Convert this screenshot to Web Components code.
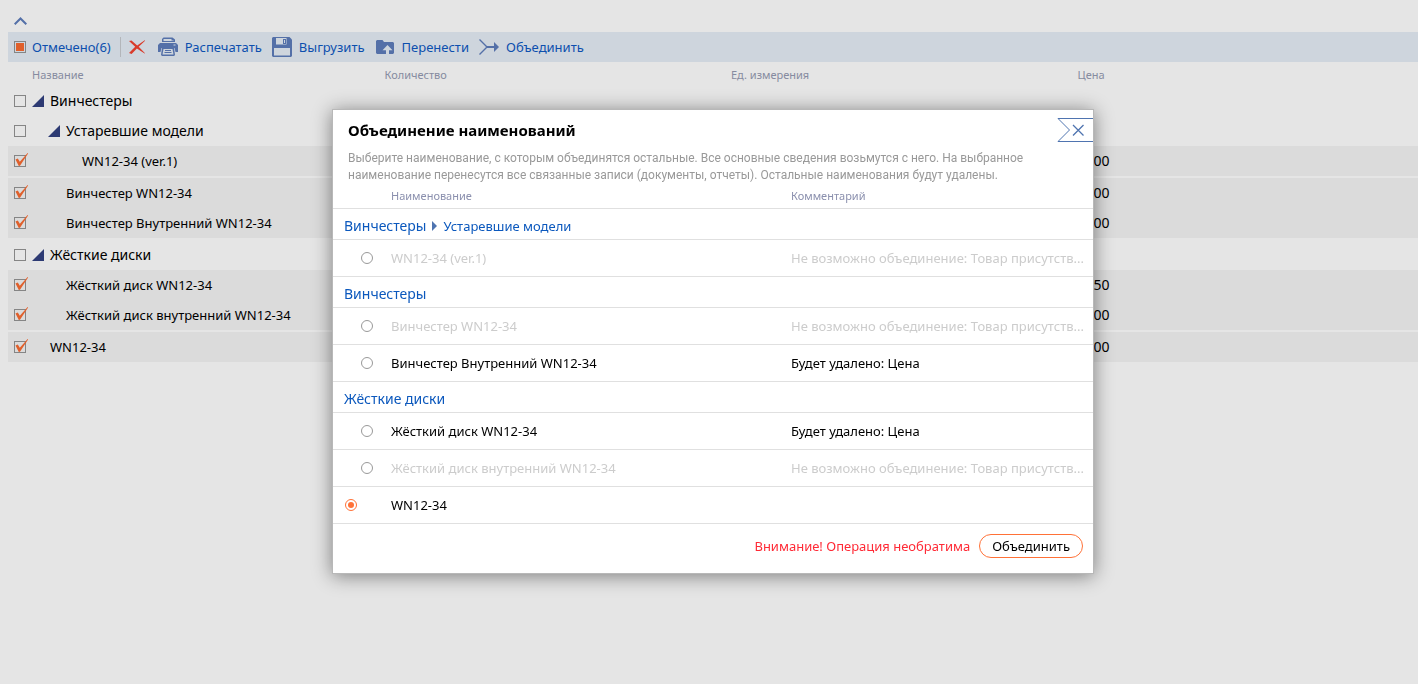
<!DOCTYPE html>
<html lang="ru">
<head>
<meta charset="utf-8">
<title>Объединение наименований</title>
<style>
  body { margin: 0; background: #fff; font: 13px/18px "Noto Sans", "Open Sans", sans-serif; color: #000; }
</style>
</head>
<body>
<catalog-page></catalog-page>

<template id="tpl-page">
  <style>
    :host { display: block; padding-right: 8px; }
    main { box-sizing: border-box; min-height: 100vh; background: #e5e5e5; padding: 12px 0 0 8px; }
    .fold { display: flex; align-items: center; width: 24px; height: 20px; padding: 0 0 2px 6px; border: 0; background: none; }
  </style>
  <main>
    <button class="fold" aria-label="Свернуть"><svg width="13" height="8" viewBox="0 0 13 8" fill="none" stroke="#5470a8" stroke-width="2"><path d="M.7 7.300 6.500 1.500l5.800 5.800"/></svg></button>
    <tool-bar></tool-bar>
    <goods-table></goods-table>
  </main>
  <merge-dialog></merge-dialog>
</template>

<template id="tpl-bar">
  <style>
    :host { display: flex; align-items: center; height: 30px; background: #ced5dd; padding: 0 6px; }
    label { display: flex; align-items: center; gap: 6px; color: #0c4fae; padding-right: 9px; }
    input { appearance: none; box-sizing: border-box; width: 12px; height: 12px; margin: 0; border: 1px solid #858585; background: #e0602c content-box; padding: 1px; }
    hr { width: 1px; height: 20px; margin: 0; border: 0; background: #b3b6ba; }
    nav { display: flex; gap: 10px; padding-left: 7px; }
  </style>
  <label><input type="checkbox" checked><span>Отмечено(6)</span></label>
  <hr>
  <nav>
    <tool-button label="Удалить"><svg width="20" height="20" viewBox="0 0 20 20"><path fill="#d93b2b" d="M1 4 3.500 3.500l5.700 5 7.500-5.200.4.400-6.400 6 6.300 6.500-.4.400-7.700-5.100-5.300 5.500L1 16l6.200-6.200z"/></svg></tool-button>
    <tool-button><svg width="20" height="20" viewBox="0 0 20 20"><path fill="#5470a8" d="M4 5V2l1.500-1.500h9L17 2.500V5zM2 6h16l2 2v7h-2.500l-1-4h-13l-1 4H0V8zM4 11h12l1 7-1 1H4l-1-1z"/><path fill="#ced5dd" d="M5.500 2h8v1.500h2V4h-10zM15.500 7.500h2v1h-2zM5.500 12h9l1 5.500h-11z"/><path fill="#5470a8" d="M7 13h6v1H7zM6.500 15h7v1h-7z"/></svg><span slot="text">Распечатать</span></tool-button>
    <tool-button><svg width="20" height="20" viewBox="0 0 20 20"><path fill="#5470a8" d="M1 0h16.500L20 2.500V19l-1 1H1l-1-1V1z"/><path fill="#ced5dd" d="M4 1h10.500v6.500H4zM2 11h16v7.500H2z"/><path fill="#5470a8" d="M11 2h3v5h-3z"/><path fill="#ced5dd" d="M12 3h1v3h-1z"/></svg><span slot="text">Выгрузить</span></tool-button>
    <tool-button><svg width="20" height="20" viewBox="0 0 20 20"><path fill="#5470a8" d="M1 4l1-1h5.500l1.500 2h9l1 1v10l-1 1H2l-1-1z"/><path fill="#ced5dd" d="m12.500 8 5 5.200h-3.500V17h-3v-3.800H7.500z"/></svg><span slot="text">Перенести</span></tool-button>
    <tool-button><svg width="20" height="20" viewBox="0 0 20 20"><g fill="none" stroke="#5470a8"><path stroke-width="1.400" d="m.5 2.500 7.500 7.500-7.500 7.500"/><path stroke-width="2" d="M8 10h8"/></g><path fill="#5470a8" d="m15 5 5 5-5 5z"/></svg><span slot="text">Объединить</span></tool-button>
  </nav>
</template>

<template id="tpl-button">
  <style>
    :host { display: block; }
    button { display: flex; align-items: center; gap: 7px; height: 30px; padding: 0; border: 0; background: none; font: inherit; color: #0c4fae; white-space: nowrap; }
    ::slotted(svg) { display: block; flex: none; }
  </style>
  <button><slot></slot><slot name="text"></slot></button>
</template>

<template id="tpl-goods">
  <style>
    :host { display: block; }
    table { width: 100%; border-collapse: collapse; table-layout: fixed; }
    .c-check { width: 24px; }
    th { box-sizing: border-box; height: 24px; padding: 2px 0 0 6px; text-align: left; font-size: 11px; font-weight: 400; color: #868ba0; }
    td { height: 30px; padding: 0 0 0 6px; }
    th:nth-child(2), td:nth-child(2) { padding-left: 0; }
    .price { font-size: 14px; }
    .marked { background: #dbdbdb; }
    .gap td { height: 2px; }
    .name { display: flex; align-items: center; gap: 6px; padding-left: calc(var(--level) * 16px); }
    .leaf { padding-left: calc(18px + var(--level) * 16px); }
    .folder { font-size: 14px; }
    .box { display: block; position: relative; width: 12px; height: 12px; }
    .box input { appearance: none; box-sizing: border-box; display: block; width: 12px; height: 12px; margin: 0; border: 1px solid #858585; }
    .box svg { position: absolute; left: 1px; top: -2px; pointer-events: none; }
  </style>
  <table>
    <colgroup><col class="c-check"><col><col><col><col></colgroup>
    <thead><tr><th></th><th>Название</th><th>Количество</th><th>Ед. измерения</th><th>Цена</th></tr></thead>
    <tbody></tbody>
  </table>
</template>

<template id="tpl-merge">
  <style>
    :host { position: fixed; inset: 0; display: flex; align-items: center; justify-content: center; padding-bottom: 1px; }
    section { width: 760px; max-width: 100%; background: #fff; border: 1px solid #b8b8b8; box-shadow: 0 2px 18px rgba(0, 0, 0, .45); }
    header { display: flex; align-items: center; justify-content: space-between; padding: 8px 0 8px 15px; }
    h1 { margin: 0; font-size: 15px; line-height: 24px; font-weight: 700; }
    .close { display: block; padding: 0; border: 0; background: none; }
    .close svg { display: block; }
    p { margin: 0; padding: 0 60px 0 15px; font: 12px/17px Roboto, "Noto Sans", sans-serif; color: #999; }
    table { width: 100%; border-collapse: collapse; table-layout: fixed; }
    .c-radio { width: 58px; }
    .c-name { width: 400px; }
    tr { border-bottom: 1px solid #e0e0e0; }
    th { height: 24px; padding: 0; text-align: left; font-size: 11px; font-weight: 400; color: #8b90ae; }
    td { height: 36px; padding: 0; white-space: nowrap; }
    .group td { height: 31px; padding: 4px 0 0 11px; box-sizing: border-box; }
    .path { display: flex; align-items: center; gap: 6px; }
    a { color: #0b58bd; text-decoration: none; }
    a:first-child { font-size: 14px; }
    .off { color: #ccc; }
    input { appearance: none; box-sizing: border-box; display: block; width: 12px; height: 12px; margin: 0 0 0 28px; border: 1px solid #999; border-radius: 50%; }
    input:checked { margin-left: 12px; border-color: #ff7137; padding: 2px; background: #ff7137 content-box; }
    footer { display: flex; align-items: center; justify-content: flex-end; gap: 9px; padding: 10px 10px 15px; color: #ff2a36; }
    .go { height: 24px; padding: 0 12px; border: 1px solid #ff7137; border-radius: 12px; background: #fff; font: inherit; color: #000; }
  </style>
  <section role="dialog" aria-labelledby="title">
    <header>
      <h1 id="title">Объединение наименований</h1>
      <button class="close" aria-label="Закрыть"><svg width="36" height="24" viewBox="0 0 36 24" fill="none" stroke="#4f74b0"><path d="M36 .5H1l11.500 11.500L1 23.500h35"/><path stroke-width="1.300" d="m16 7 10.500 10.500M26.500 7 16 17.500"/></svg></button>
    </header>
    <p>Выберите наименование, с которым объединятся остальные. Все основные сведения возьмутся с него. На выбранное наименование перенесутся все связанные записи (документы, отчеты). Остальные наименования будут удалены.</p>
    <table>
      <colgroup><col class="c-radio"><col class="c-name"><col></colgroup>
      <thead><tr><th></th><th>Наименование</th><th>Комментарий</th></tr></thead>
      <tbody></tbody>
    </table>
    <footer><span>Внимание! Операция необратима</span><button class="go">Объединить</button></footer>
  </section>
</template>

<script>
  class Base extends HTMLElement {
    constructor() {
      super();
      this.attachShadow({ mode: 'open' })
        .append(document.getElementById(this.constructor.tpl).content.cloneNode(true));
    }
  }

  class CatalogPage extends Base { static tpl = 'tpl-page'; }
  class ToolBar extends Base { static tpl = 'tpl-bar'; }

  class ToolButton extends Base {
    static tpl = 'tpl-button';
    connectedCallback() {
      const label = this.getAttribute('label');
      if (label) this.shadowRoot.querySelector('button').setAttribute('aria-label', label);
    }
  }

  class GoodsTable extends Base {
    static tpl = 'tpl-goods';
    // kind, nesting level, name, price
    rows = [
      ['folder', 0, 'Винчестеры'],
      ['folder', 1, 'Устаревшие модели'],
      ['leaf', 2, 'WN12-34 (ver.1)', '1000'],
      ['gap'],
      ['leaf', 1, 'Винчестер WN12-34', '1000'],
      ['leaf', 1, 'Винчестер Внутренний WN12-34', '1000'],
      ['gap'],
      ['folder', 0, 'Жёсткие диски'],
      ['leaf', 1, 'Жёсткий диск WN12-34', '1050'],
      ['leaf', 1, 'Жёсткий диск внутренний WN12-34', '1000'],
      ['gap'],
      ['leaf', 0, 'WN12-34', '1000']
    ];
    connectedCallback() {
      const mark = '<svg width="14" height="14" viewBox="0 0 14 14"><path fill="#e0602c" d="M.5 6.500 2.800 5.500l2 3.300L12.600 0l.5.400L5 12.800 3.800 13z"/></svg>';
      const corner = '<svg width="12" height="12" viewBox="0 0 12 12"><path fill="#2d3a73" d="M12 0v12H0z"/></svg>';
      this.shadowRoot.querySelector('tbody').innerHTML = this.rows.map(([kind, level, name, price], i) => {
        if (kind === 'gap') return '<tr class="gap"><td colspan="5"></td></tr>';
        const leaf = kind === 'leaf';
        return `<tr class="${leaf ? 'marked' : ''}">
          <td><span class="box"><input type="checkbox" id="g${i}" ${leaf ? 'checked' : ''}>${leaf ? mark : ''}</span></td>
          <td><label for="g${i}" class="name ${kind}" style="--level:${level}">${leaf ? '' : corner}<span>${name}</span></label></td>
          <td></td><td></td><td class="price">${price || ''}</td></tr>`;
      }).join('');
    }
  }

  class MergeDialog extends Base {
    static tpl = 'tpl-merge';
    connectedCallback() {
      const busy = 'Не возможно объединение: Товар присутств...';
      const lost = 'Будет удалено: Цена';
      const rows = [
        { path: ['Винчестеры', 'Устаревшие модели'] },
        { name: 'WN12-34 (ver.1)', note: busy, off: true },
        { path: ['Винчестеры'] },
        { name: 'Винчестер WN12-34', note: busy, off: true },
        { name: 'Винчестер Внутренний WN12-34', note: lost },
        { path: ['Жёсткие диски'] },
        { name: 'Жёсткий диск WN12-34', note: lost },
        { name: 'Жёсткий диск внутренний WN12-34', note: busy, off: true },
        { name: 'WN12-34', note: '', checked: true }
      ];
      const arrow = '<svg width="5" height="10" viewBox="0 0 5 10"><path fill="#4f74b0" d="M0 0v10l5-5z"/></svg>';
      this.shadowRoot.querySelector('tbody').innerHTML = rows.map((r, i) => r.path
        ? `<tr class="group"><td colspan="3"><div class="path">${r.path.map(p => `<a href="#">${p}</a>`).join(arrow)}</div></td></tr>`
        : `<tr class="${r.off ? 'off' : ''}">
            <td><input type="radio" name="target" id="m${i}" ${r.checked ? 'checked' : ''} ${r.off ? 'disabled' : ''}></td>
            <td><label for="m${i}">${r.name}</label></td><td>${r.note}</td></tr>`).join('');
    }
  }

  customElements.define('tool-button', ToolButton);
  customElements.define('tool-bar', ToolBar);
  customElements.define('goods-table', GoodsTable);
  customElements.define('merge-dialog', MergeDialog);
  customElements.define('catalog-page', CatalogPage);
</script>
</body>
</html>
